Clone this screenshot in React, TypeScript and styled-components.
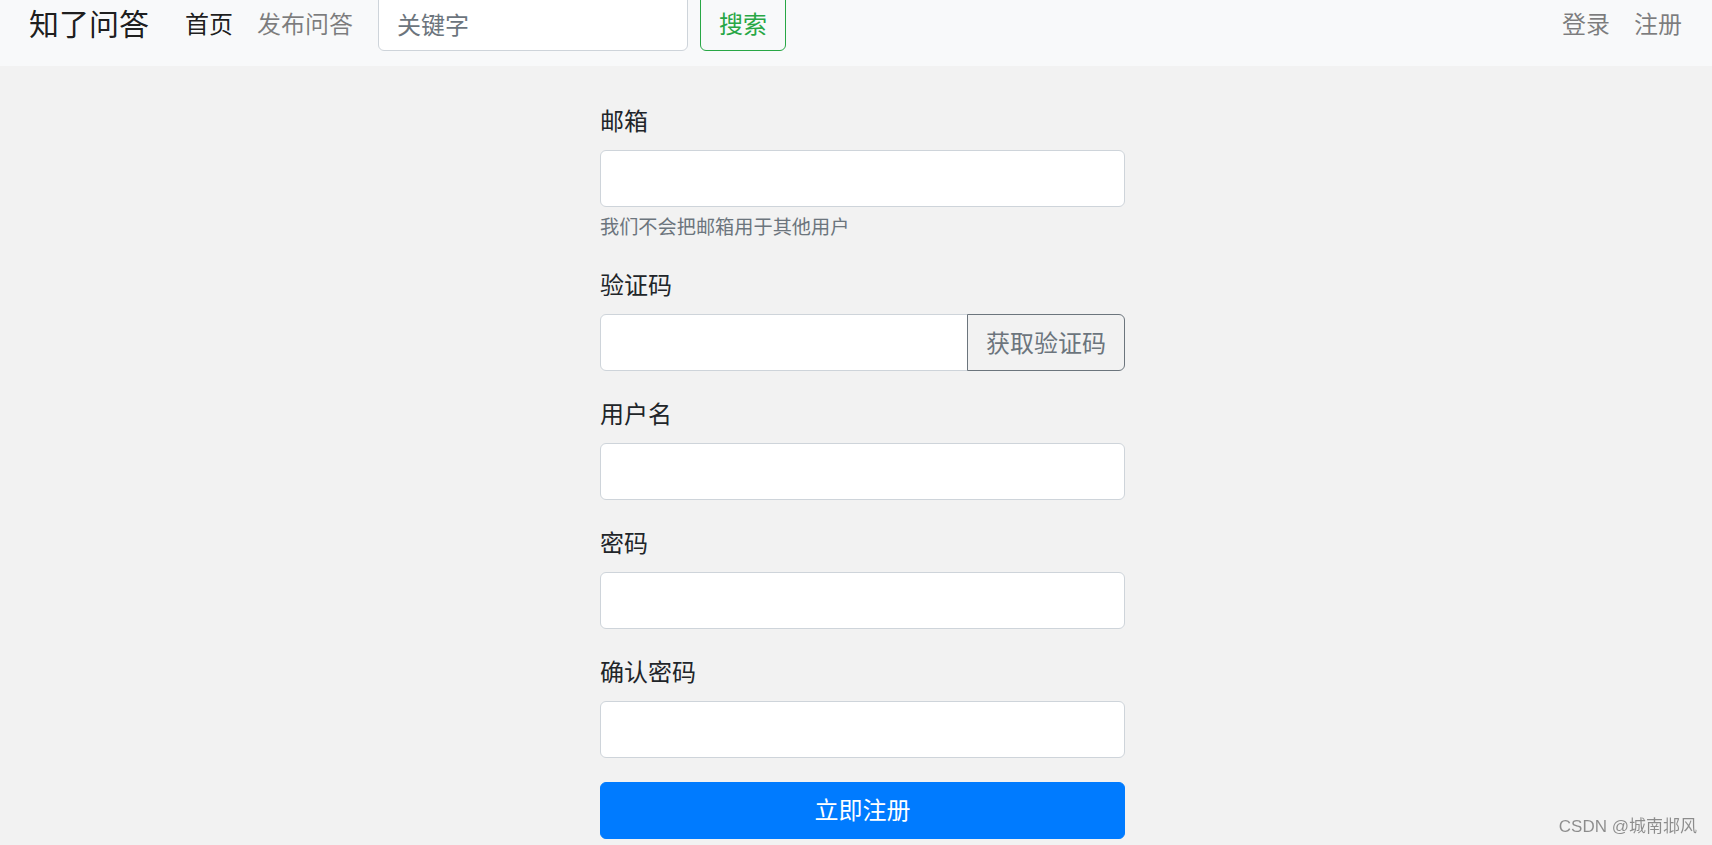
import React from "react";
import styled, { createGlobalStyle } from "styled-components";

const GlobalStyle = createGlobalStyle`
	html, body {
		margin: 0;
		padding: 0;
		height: 100%;
		overflow: hidden;
		background: #f2f2f2;
	}
	body {
		font-family: "Liberation Sans", "Noto Sans CJK SC", sans-serif;
		font-size: 24px;
		line-height: 1.5;
		color: #212529;
	}
	* {
		box-sizing: border-box;
	}
`;

const Navbar = styled.nav`
	height: 66px;
	overflow: hidden;
	background: #f8f9fa;
	display: flex;
	align-items: flex-end;
	padding: 0 18px 15px 29px;
`;

const NavRow = styled.div`
	flex: 1;
	height: 57px;
	display: flex;
	align-items: center;
`;

const Brand = styled.a`
	padding-top: 4px;
	font-size: 30px;
	line-height: 1.5;
	color: rgba(0, 0, 0, 0.9);
	margin-right: 24px;
	white-space: nowrap;
`;

const NavLink = styled.a<{ $active?: boolean }>`
	padding: 4px 12px 0;
	font-size: 24px;
	white-space: nowrap;
	color: ${(p) => (p.$active ? "rgba(0, 0, 0, 0.9)" : "rgba(0, 0, 0, 0.5)")};
`;

const SearchForm = styled.form`
	display: flex;
	align-items: center;
	margin-left: 13px;
	height: 100%;
`;

const SearchInput = styled.input`
	width: 310px;
	height: 57px;
	padding: 12px 18px 6px;
	font: inherit;
	font-size: 24px;
	color: #495057;
	background: #fff;
	border: 1px solid #ced4da;
	border-radius: 6px;
	outline: none;
	&::placeholder {
		color: #6c757d;
	}
`;

const SearchButton = styled.button`
	margin-left: 12px;
	height: 57px;
	padding: 4px 18px 0;
	font: inherit;
	font-size: 24px;
	color: #28a745;
	background: transparent;
	border: 1px solid #28a745;
	border-radius: 6px;
`;

const NavRight = styled.div`
	margin-left: auto;
	display: flex;
	align-items: center;
`;

const Main = styled.main`
	display: flex;
	justify-content: center;
	padding: 36px 0 0 13px;
`;

const Form = styled.form`
	width: 525px;
`;

const FormGroup = styled.div`
	margin-bottom: 24px;
`;

const Label = styled.label`
	display: block;
	padding-top: 2px;
	margin-bottom: 10px;
	font-size: 24px;
	line-height: 36px;
	color: #212529;
`;

const Input = styled.input<{ $grouped?: boolean }>`
	display: block;
	width: 100%;
	height: 57px;
	padding: 9px 18px;
	font: inherit;
	font-size: 24px;
	color: #495057;
	background: #fff;
	border: 1px solid #ced4da;
	border-radius: ${(p) => (p.$grouped ? "6px 0 0 6px" : "6px")};
	outline: none;
`;

const Help = styled.small`
	display: block;
	margin-top: 8px;
	font-size: 19.2px;
	line-height: 26.8px;
	color: #6c757d;
`;

const InputGroup = styled.div`
	display: flex;
	align-items: stretch;
`;

const AppendButton = styled.button`
	flex: none;
	margin-left: -1px;
	height: 57px;
	padding: 3px 18px 0;
	font: inherit;
	font-size: 24px;
	white-space: nowrap;
	color: #6c757d;
	background: transparent;
	border: 1px solid #6c757d;
	border-radius: 0 6px 6px 0;
`;

const SubmitButton = styled.button`
	display: block;
	width: 100%;
	height: 57px;
	padding-top: 3px;
	font: inherit;
	font-size: 24px;
	color: #fff;
	background: #007bff;
	border: 1px solid #007bff;
	border-radius: 6px;
`;

const Watermark = styled.div`
	position: fixed;
	right: 15px;
	bottom: 7px;
	font-family: "Liberation Sans", "Noto Sans CJK SC", sans-serif;
	font-size: 17px;
	line-height: 1.3;
	color: rgba(0, 0, 0, 0.42);
	pointer-events: none;
`;

const fields = [
	{ label: "用户名", type: "text" },
	{ label: "密码", type: "password" },
	{ label: "确认密码", type: "password" },
];

export default function App() {
	return (
		<>
			<GlobalStyle />
			<Navbar>
				<NavRow>
					<Brand>知了问答</Brand>
					<NavLink $active>首页</NavLink>
					<NavLink>发布问答</NavLink>
					<SearchForm onSubmit={(e) => e.preventDefault()}>
						<SearchInput placeholder="关键字" />
						<SearchButton type="submit">搜索</SearchButton>
					</SearchForm>
					<NavRight>
						<NavLink>登录</NavLink>
						<NavLink>注册</NavLink>
					</NavRight>
				</NavRow>
			</Navbar>
			<Main>
				<Form onSubmit={(e) => e.preventDefault()}>
					<FormGroup>
						<Label>邮箱</Label>
						<Input type="email" />
						<Help>我们不会把邮箱用于其他用户</Help>
					</FormGroup>
					<FormGroup>
						<Label>验证码</Label>
						<InputGroup>
							<Input type="text" $grouped />
							<AppendButton type="button">获取验证码</AppendButton>
						</InputGroup>
					</FormGroup>
					{fields.map((f) => (
						<FormGroup key={f.label}>
							<Label>{f.label}</Label>
							<Input type={f.type} />
						</FormGroup>
					))}
					<SubmitButton type="submit">立即注册</SubmitButton>
				</Form>
			</Main>
			<Watermark>CSDN @城南邶风</Watermark>
		</>
	);
}
